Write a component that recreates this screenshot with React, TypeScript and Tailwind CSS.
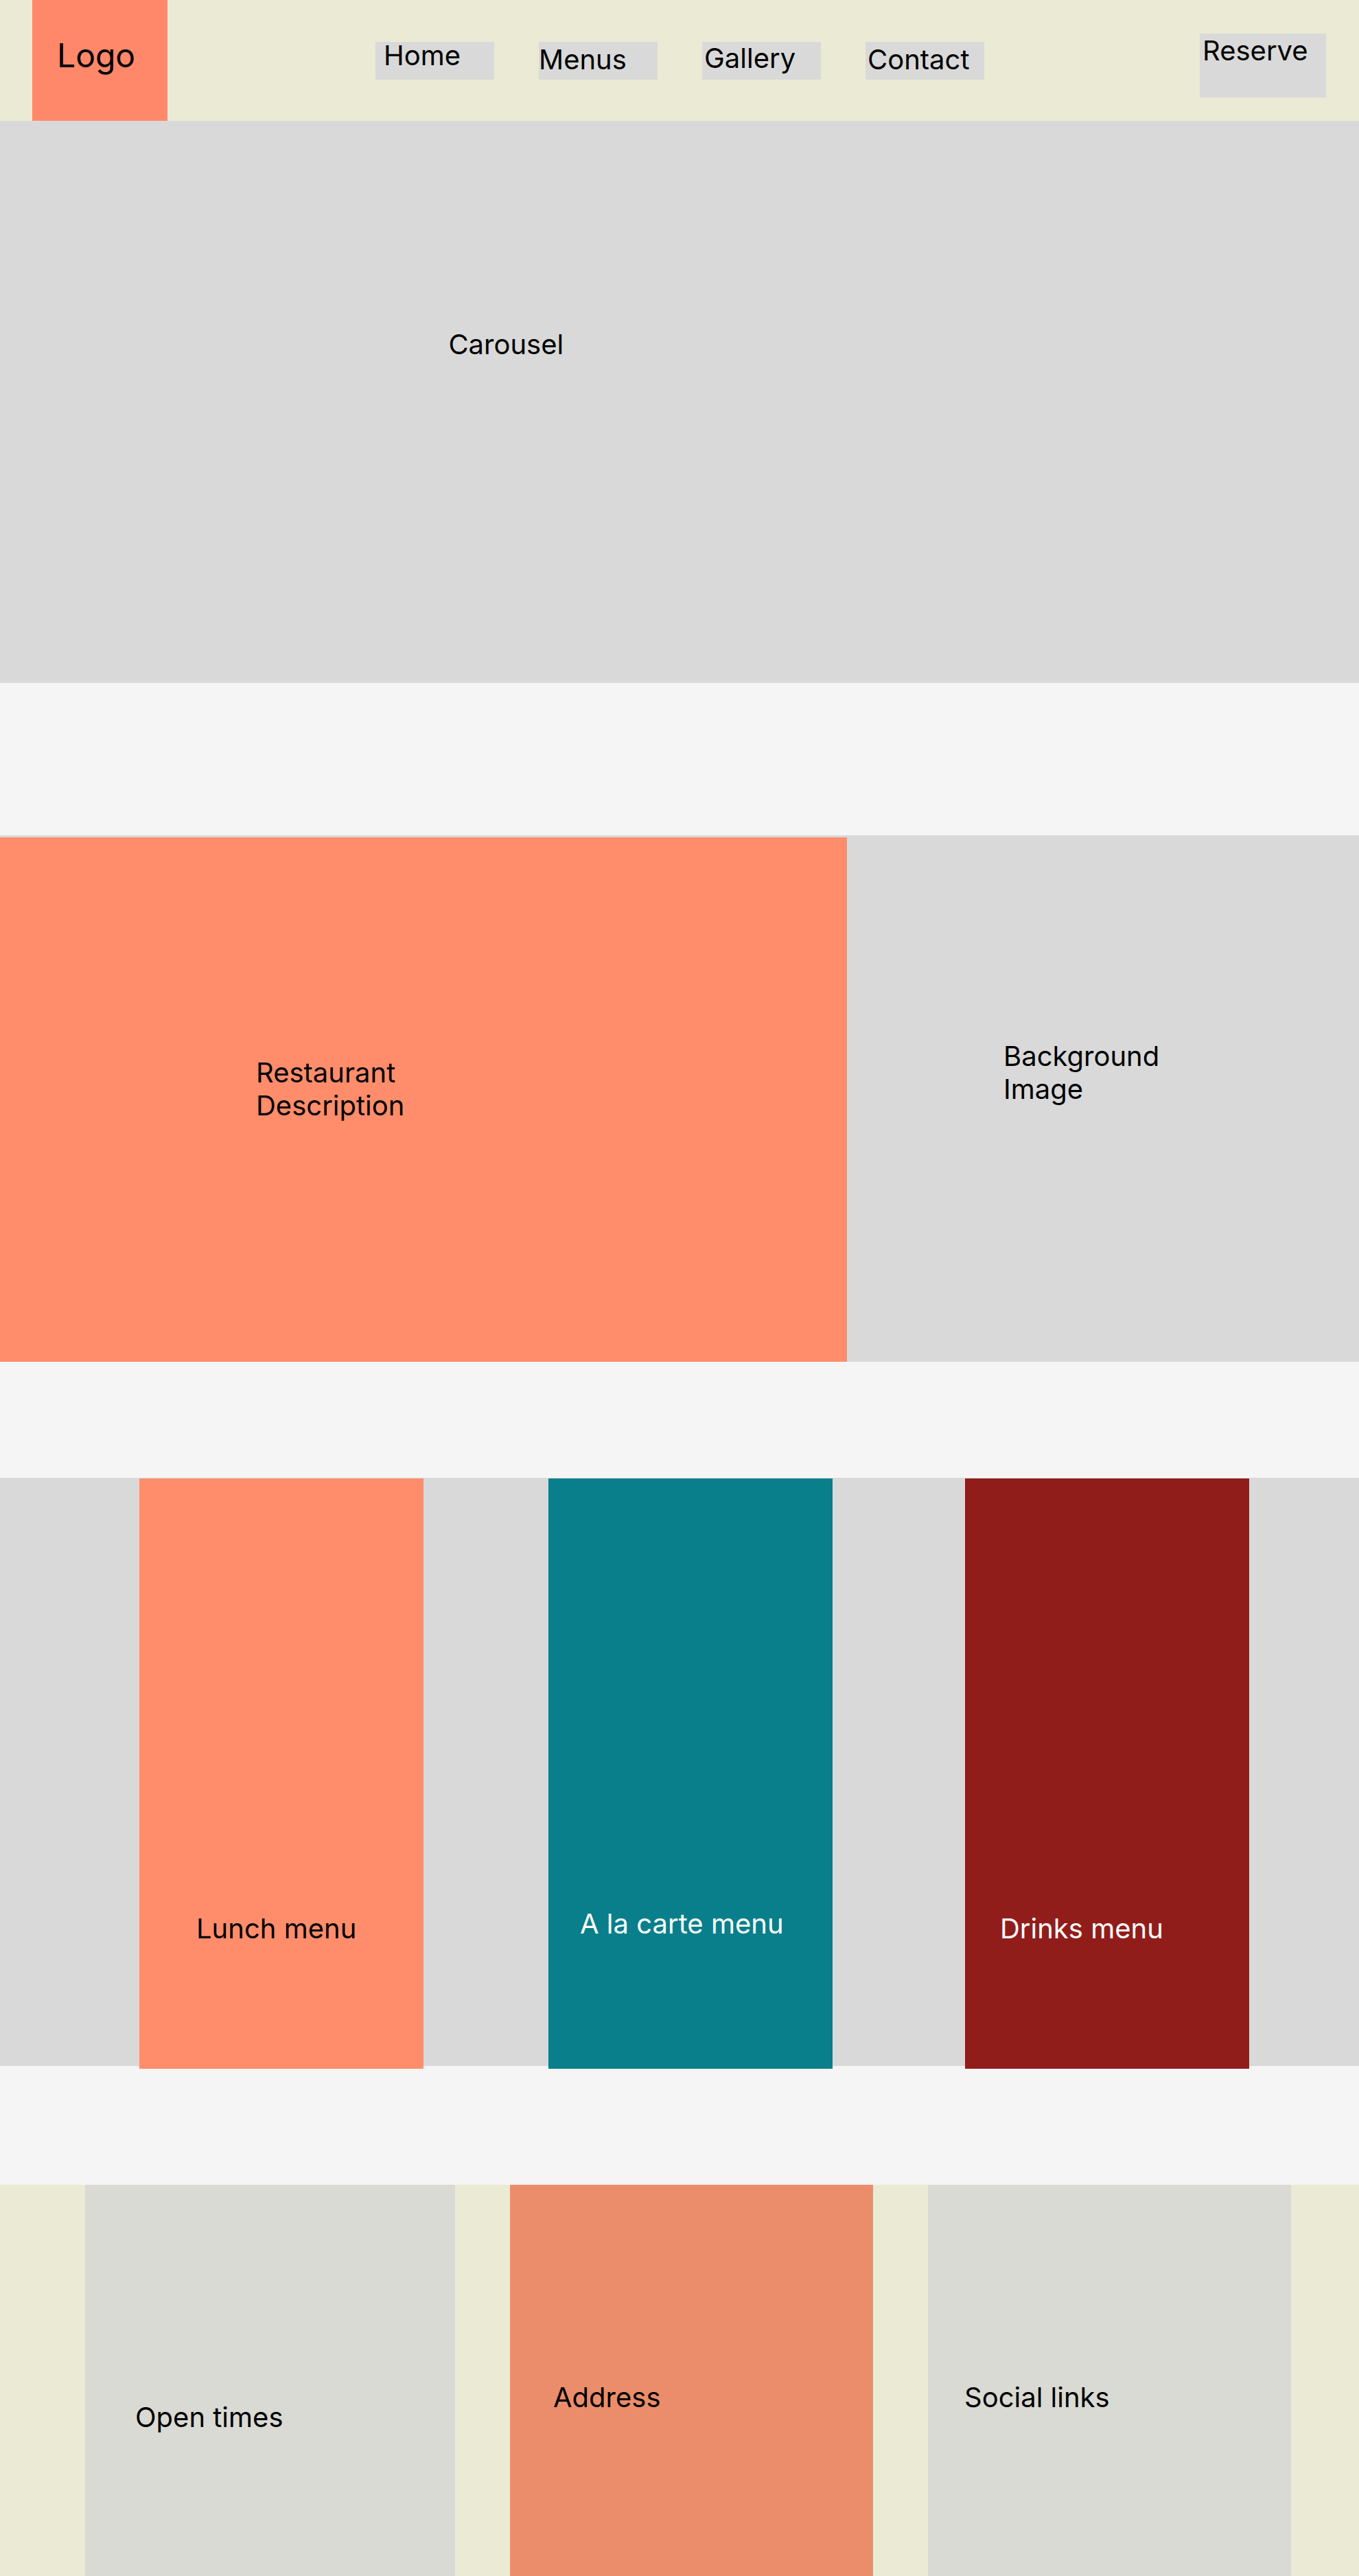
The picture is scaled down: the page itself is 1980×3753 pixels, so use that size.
const navItems = [
  { label: "Home", href: "#home", pad: "pl-3" },
  { label: "Menus", href: "#menus", pad: "pt-1.5" },
  { label: "Gallery", href: "#gallery", pad: "pt-1 pl-[3px]" },
  { label: "Contact", href: "#contact", pad: "pt-1.5 pl-[3px]" },
];

function Header() {
  return (
    <header className="flex h-44 items-start bg-[#ebead5] pl-[47px] pr-12">
      <a href="#home" className="block h-full w-[197px] shrink-0 bg-[#ff886a] pl-9 pt-[52px] text-5xl leading-[58px]">
        Logo
      </a>
      <nav aria-label="Main" className="flex flex-1 justify-center gap-[65px] pr-[11px] pt-[61px]">
        {navItems.map((item) => (
          <a key={item.label} href={item.href} className={`block h-[55px] w-[173px] bg-[#d9d9d9] leading-10 ${item.pad}`}>
            {item.label}
          </a>
        ))}
      </nav>
      <button type="button" className="mt-[49px] flex h-[93px] w-[184px] shrink-0 items-start bg-[#d9d9d9] pl-1 pt-px text-left">
        Reserve
      </button>
    </header>
  );
}

export default function App() {
  return (
    <div className="min-h-screen bg-[#f5f5f5] font-['Inter',sans-serif] text-[40px] leading-[48px] text-black">
      <Header />
      <main>
        <section id="home" className="h-[819px] bg-[#d9d9d9] pl-[33%] pt-[302px]">
          <h1>Carousel</h1>
        </section>

        <section id="gallery" className="mt-[222px] flex h-[767px] bg-[#d9d9d9]">
          <div className="mt-[3px] w-[1234px] shrink bg-[#ff8d6b] pl-[373px] pt-[319px]">
            <p>
              Restaurant
              <br />
              Description
            </p>
          </div>
          <div className="flex-1 pl-[228px] pt-[298px]">
            <p>
              Background
              <br />
              Image
            </p>
          </div>
        </section>

        <section id="menus" className="mt-[169px] flex h-[857px] bg-[#d9d9d9] pl-[203px] pr-40 pt-px">
          <article className="flex h-[860px] w-[414px] items-end bg-[#ff8d6b] pb-[180px] pl-[83px]">
            <h2>Lunch menu</h2>
          </article>
          <article className="ml-[182px] flex h-[860px] w-[414px] items-end bg-[#087f8a] pb-[187px] pl-[46px] text-white">
            <h2>A la carte menu</h2>
          </article>
          <article className="ml-[193px] flex h-[860px] w-[414px] items-end bg-[#911d1b] pb-[180px] pl-[51px] text-white">
            <h2>Drinks menu</h2>
          </article>
        </section>
      </main>

      <footer id="contact" className="mt-[173px] flex h-[570px] gap-20 bg-[#ebead5] pl-[124px] pr-[99px]">
        <section className="w-[539px] bg-[#d9dad4] pl-[73px] pt-[315px]">
          <h2>Open times</h2>
        </section>
        <section className="w-[529px] bg-[#eb8d6b] pl-[63px] pt-[286px]">
          <h2>Address</h2>
        </section>
        <section className="w-[529px] bg-[#d9dad4] pl-[53px] pt-[286px]">
          <h2>Social links</h2>
        </section>
      </footer>
    </div>
  );
}
